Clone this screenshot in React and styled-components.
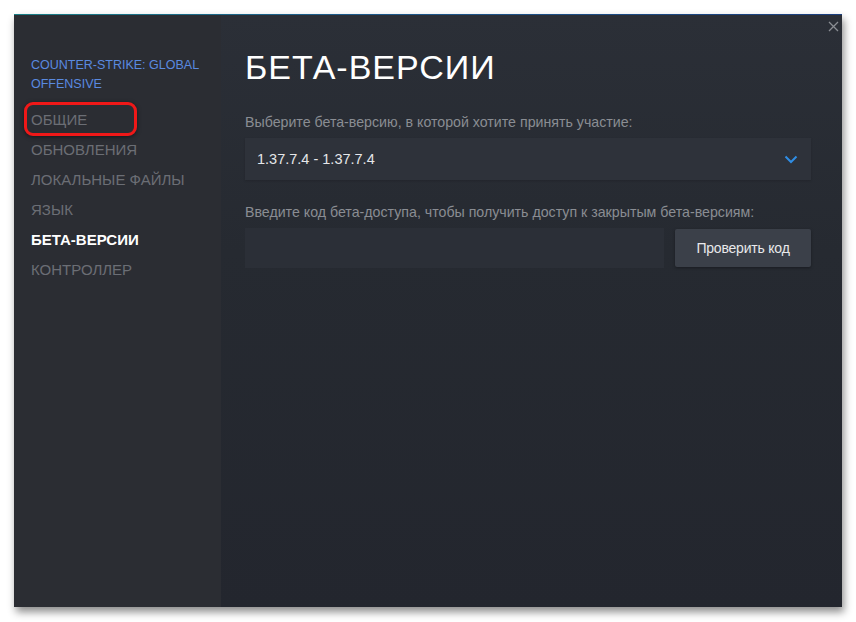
import React from "react";
import styled, { createGlobalStyle } from "styled-components";

const Global = createGlobalStyle`
  html, body { margin: 0; padding: 0; background: #ffffff; }
  body { width: 856px; height: 622px; overflow: hidden; font-family: "Liberation Sans", Arial, sans-serif; }
  #root { padding: 14px 14px 0 14px; }
`;

const Window = styled.div`
  position: relative;
  width: 828px;
  height: 593px;
  display: grid;
  grid-template-columns: 207px 1fr;
  background: #23262e;
  box-shadow: 2px 5px 8px rgba(0, 0, 0, 0.45);
  &::before {
    content: "";
    position: absolute;
    left: 0; right: 0; top: 0;
    height: 1px;
    background: linear-gradient(90deg, #1a7f86 0%, #1d5a8a 40%, #1b3f7e 100%);
  }
`;

const Sidebar = styled.nav`
  background: #2b2d33;
  padding: 42px 10px 0 17px;
  display: flex;
  flex-direction: column;
`;

const GameTitle = styled.div`
  color: #5a8ae0;
  font-size: 12.5px;
  line-height: 19px;
  text-transform: uppercase;
  margin-bottom: 11px;
`;

const NavItem = styled.div`
  position: relative;
  font-size: 15px;
  line-height: 30px;
  color: ${(p) => (p.$active ? "#ffffff" : "#6b6e75")};
  font-weight: ${(p) => (p.$active ? 600 : 400)};
`;

const Highlight = styled.span`
  position: absolute;
  left: -7px;
  top: -3px;
  width: 107px;
  height: 28px;
  border: 3px solid #f01818;
  border-radius: 9px;
  box-shadow: 0 1px 4px rgba(0,0,0,0.5);
`;

const Main = styled.main`
  background: linear-gradient(180deg, #2b2f37 0%, #262a31 40%, #23262e 100%);
  padding: 33px 31px 0 24px;
  display: flex;
  flex-direction: column;
`;

const Close = styled.button`
  position: absolute;
  top: 5px;
  right: 2px;
  width: 14px;
  height: 14px;
  padding: 0;
  border: 0;
  background: transparent;
  display: flex;
  align-items: center;
  justify-content: center;
`;

const Title = styled.h1`
  margin: 0;
  font-weight: 400;
  font-size: 34px;
  letter-spacing: 1px;
  color: #ffffff;
  line-height: 40px;
`;

const Label = styled.div`
  margin-top: ${(p) => p.$mt}px;
  color: #8a8d93;
  font-size: 14.2px;
  line-height: 18px;
`;

const Select = styled.div`
  margin-top: 7px;
  height: 42px;
  background: #2e323a;
  display: flex;
  align-items: center;
  justify-content: space-between;
  padding: 0 13px 0 12px;
  color: #e6e7e9;
  font-size: 14.5px;
  box-shadow: 0 1px 2px rgba(0,0,0,0.15);
`;

const Row = styled.div`
  margin-top: 7px;
  display: flex;
  gap: 11px;
  align-items: center;
`;

const Input = styled.div`
  flex: 1;
  height: 40px;
  background: #2b2f37;
`;

const Button = styled.button`
  width: 136px;
  height: 38px;
  border: 0;
  border-radius: 2px;
  background: #3b4049;
  color: #e8e9eb;
  font-family: "Liberation Sans", Arial, sans-serif;
  font-size: 14px;
  letter-spacing: -0.2px;
  box-shadow: 0 1px 3px rgba(0,0,0,0.35);
`;

const navItems = ["ОБЩИЕ", "ОБНОВЛЕНИЯ", "ЛОКАЛЬНЫЕ ФАЙЛЫ", "ЯЗЫК", "БЕТА-ВЕРСИИ", "КОНТРОЛЛЕР"];

export default function App() {
  return (
    <>
      <Global />
      <Window>
        <Sidebar>
          <GameTitle>Counter-Strike: Global<br />Offensive</GameTitle>
          {navItems.map((n, i) => (
            <NavItem key={n} $active={n === "БЕТА-ВЕРСИИ"}>
              {i === 0 && <Highlight />}
              {n}
            </NavItem>
          ))}
        </Sidebar>
        <Main>
          <Title>БЕТА-ВЕРСИИ</Title>
          <Label $mt={26}>Выберите бета-версию, в которой хотите принять участие:</Label>
          <Select>
            <span>1.37.7.4 - 1.37.7.4</span>
            <svg width="14" height="9" viewBox="0 0 14 9">
              <path d="M1.5 1.5 L7 7 L12.5 1.5" fill="none" stroke="#2f8de4" strokeWidth="2" />
            </svg>
          </Select>
          <Label $mt={23}>Введите код бета-доступа, чтобы получить доступ к закрытым бета-версиям:</Label>
          <Row>
            <Input />
            <Button>Проверить код</Button>
          </Row>
        </Main>
        <Close aria-label="close">
          <svg width="11" height="11" viewBox="0 0 11 11">
            <path d="M1 1 L10 10 M10 1 L1 10" stroke="#8a8d93" strokeWidth="1.3" />
          </svg>
        </Close>
      </Window>
    </>
  );
}
